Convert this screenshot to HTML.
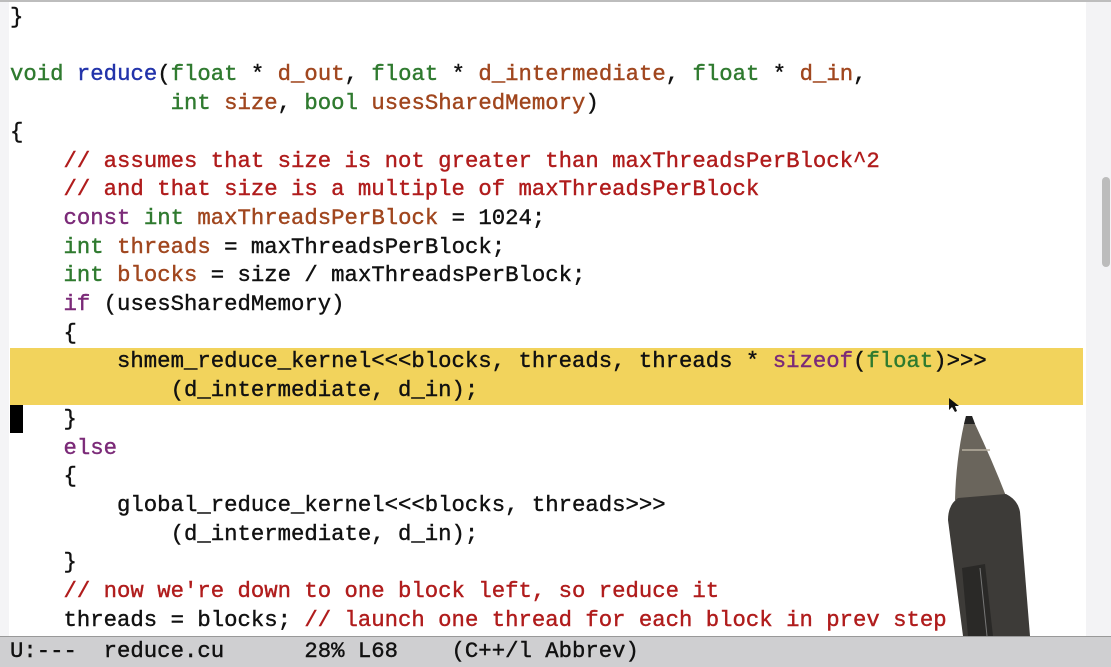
<!DOCTYPE html>
<html><head><meta charset="utf-8"><style>
html,body{margin:0;padding:0;width:1111px;height:666px;overflow:hidden;background:#fff;}
#top{position:absolute;left:0;top:0;width:1111px;height:2px;background:#bdbdbd;}
#gut{position:absolute;left:0;top:2px;width:9px;height:634px;background:#f4f4f6;}
#hl{position:absolute;left:10px;top:348px;width:1073px;height:57px;background:#f2d35c;}
#code{position:absolute;left:10px;top:3px;margin:0;font-family:"Liberation Mono",monospace;font-size:22.3px;line-height:28.7px;color:#111;white-space:pre;-webkit-text-stroke:0.4px currentColor;}
.k{color:#2f7a2f}.p{color:#7b2a78}.f{color:#2233aa}.v{color:#a0461e}.c{color:#b01c1c}
#sb{position:absolute;left:1086px;top:2px;width:25px;height:634px;background:#f3f3f5;}
#th{position:absolute;left:1102px;top:177px;width:8px;height:90px;background:#bcbcbc;border-radius:4px;}
#cur{position:absolute;left:10px;top:405px;width:13px;height:28px;background:#000;}
#ml{position:absolute;left:0;top:636px;width:1101px;padding-left:10px;height:30px;background:#cfcfd1;border-top:1px solid #999;font-family:"Liberation Mono",monospace;font-size:22.3px;line-height:28px;white-space:pre;color:#111;-webkit-text-stroke:0.4px #111;}
</style></head><body>
<div id="top"></div><div id="gut"></div>
<div id="hl"></div>
<pre id="code">}

<span class="k">void</span> <span class="f">reduce</span>(<span class="k">float</span> * <span class="v">d_out</span>, <span class="k">float</span> * <span class="v">d_intermediate</span>, <span class="k">float</span> * <span class="v">d_in</span>,
            <span class="k">int</span> <span class="v">size</span>, <span class="k">bool</span> <span class="v">usesSharedMemory</span>)
{
    <span class="c">// assumes that size is not greater than maxThreadsPerBlock^2</span>
    <span class="c">// and that size is a multiple of maxThreadsPerBlock</span>
    <span class="p">const</span> <span class="k">int</span> <span class="v">maxThreadsPerBlock</span> = 1024;
    <span class="k">int</span> <span class="v">threads</span> = maxThreadsPerBlock;
    <span class="k">int</span> <span class="v">blocks</span> = size / maxThreadsPerBlock;
    <span class="p">if</span> (usesSharedMemory)
    {
        shmem_reduce_kernel&lt;&lt;&lt;blocks, threads, threads * <span class="p">sizeof</span>(<span class="k">float</span>)&gt;&gt;&gt;
            (d_intermediate, d_in);
    }
    <span class="p">else</span>
    {
        global_reduce_kernel&lt;&lt;&lt;blocks, threads&gt;&gt;&gt;
            (d_intermediate, d_in);
    }
    <span class="c">// now we're down to one block left, so reduce it</span>
    threads = blocks; <span class="c">// launch one thread for each block in prev step</span>
</pre>
<div id="cur"></div>
<div id="sb"></div><div id="th"></div>
<svg style="position:absolute;left:0;top:0" width="1111" height="666">
<path d="M949 398 L949 410 L952 407 L955 412 L957 411 L955 406 L959 406 Z" fill="#111"/>
<path d="M966 416 L972 416 L975 424 Q992 460 1006 496 L955 500 Q956 460 964 424 Z" fill="#6a655c"/>
<path d="M966 416 L972 416 L975 424 L964 424 Z" fill="#222"/>
<path d="M962 450 L990 450" stroke="#b8b0a0" stroke-width="1.5"/>
<path d="M958 498 L1006 494 Q1018 500 1020 512 L1030 636 L963 636 L948 520 Q948 505 958 498 Z" fill="#3d3b38"/>
<path d="M962 568 L985 564 L993 636 L968 636 Z" fill="#2a2927"/>
<path d="M980 568 L987 636" stroke="#777" stroke-width="1"/>
</svg>
<div id="ml">U:---  reduce.cu      28% L68    (C++/l Abbrev)</div>
</body></html>
